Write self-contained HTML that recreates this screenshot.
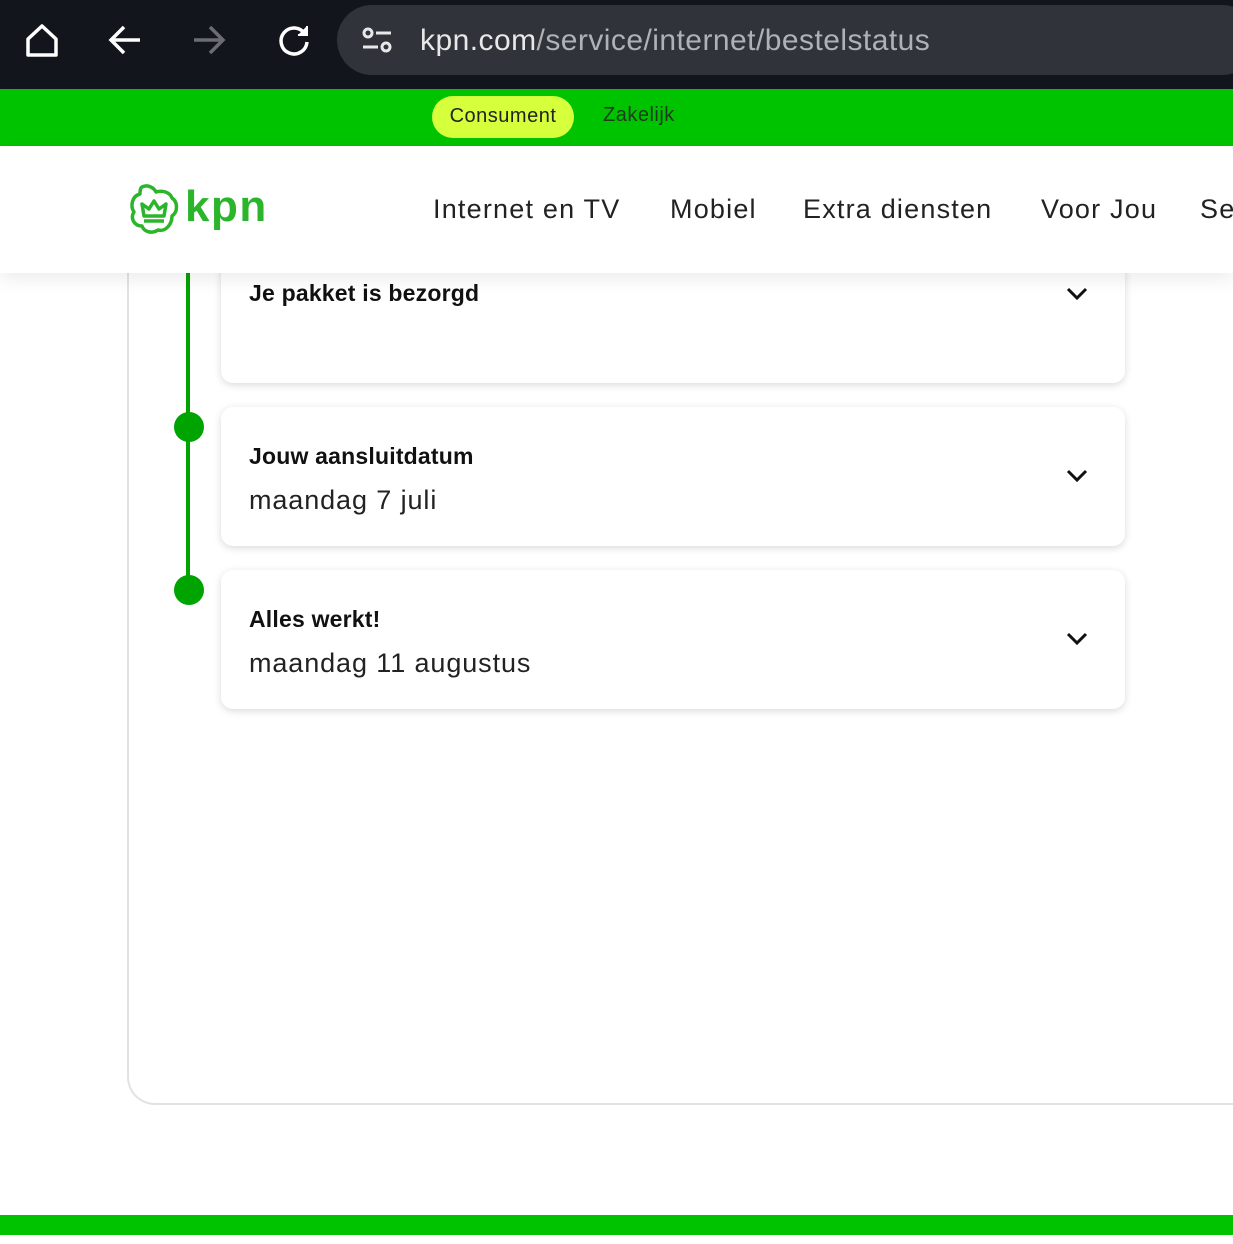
<!DOCTYPE html>
<html><head><style>
*{margin:0;padding:0;box-sizing:border-box}
body{width:1233px;height:1244px;background:#fff;position:relative;overflow:hidden;font-family:"Liberation Sans",sans-serif;color:#111}
.top{position:absolute;left:0;top:0;width:1233px;height:89px;background:#12151c}
.url{position:absolute;left:337px;top:5px;width:920px;height:70px;border-radius:35px;background:#30333a}
.url span{position:absolute;left:83px;top:19px;font-size:30px;color:#e8e8e8;letter-spacing:0.45px}
.url span b{font-weight:normal;color:#aeb1b6}
.gbar{position:absolute;left:0;top:89px;width:1233px;height:57px;background:#00c300}
.pill{position:absolute;left:432px;top:96px;width:142px;height:42px;border-radius:21px;background:#d6ff3c;font-size:20px;text-align:center;line-height:40px;color:#222;letter-spacing:0.5px}
.zak{position:absolute;left:603px;top:104px;font-size:20px;color:#1f3a1f;letter-spacing:0.5px}
.hdr{position:absolute;left:0;top:146px;width:1233px;height:127px;background:#fff;box-shadow:0 6px 18px rgba(0,0,0,.08);z-index:5}
.nav{position:absolute;top:48px;font-size:27px;color:#222;letter-spacing:1.2px}
.frame{position:absolute;left:127px;top:200px;width:1200px;height:905px;border:2px solid #e2e2e2;border-top:none;border-right:none;border-bottom-left-radius:28px}
.line{position:absolute;left:186px;top:260px;width:4px;height:330px;background:#00a400}
.dot{position:absolute;left:174px;width:30px;height:30px;border-radius:50%;background:#00a400}
.card{position:absolute;left:221px;width:904px;background:#fff;border-radius:12px;box-shadow:0 2px 8px rgba(0,0,0,.15)}
.card h3{position:absolute;left:28px;font-size:23px;font-weight:bold;letter-spacing:0.2px}
.card p{position:absolute;left:28px;font-size:27px;color:#222;letter-spacing:0.9px}
.card svg{position:absolute;left:845px}
.bottom{position:absolute;left:0;top:1215px;width:1233px;height:20px;background:#00c300}
</style></head><body>
<div class="top">
<svg style="position:absolute;left:24px;top:22px" width="36" height="36" viewBox="0 0 36 36" fill="none" stroke="#fff" stroke-width="3.5" stroke-linejoin="round"><path d="M4 17L18 4L32 17V33H4Z"/></svg>
<svg style="position:absolute;left:108px;top:24px" width="34" height="32" viewBox="0 0 34 32" fill="none" stroke="#fff" stroke-width="3.5"><path d="M32 16H4M16 3L3 16L16 29"/></svg>
<svg style="position:absolute;left:192px;top:24px" width="34" height="32" viewBox="0 0 34 32" fill="none" stroke="#6a6d72" stroke-width="3.5"><path d="M2 16H30M18 3L31 16L18 29"/></svg>
<svg style="position:absolute;left:276px;top:22px" width="36" height="36" viewBox="0 0 36 36" fill="none" stroke="#fff" stroke-width="3.5"><path d="M29 12A13 13 0 1 0 31 20"/><path d="M31 4V13H22" fill="#fff" stroke-width="2"/></svg>
<div class="url">
<svg style="position:absolute;left:24px;top:22px" width="32" height="28" viewBox="0 0 32 28" fill="none" stroke="#e8e8e8" stroke-width="3"><circle cx="7" cy="6" r="4"/><path d="M15 6H30M2 20H17"/><circle cx="25" cy="20" r="4"/></svg>
<span>kpn.com<b>/service/internet/bestelstatus</b></span></div>
</div>
<div class="gbar"></div>
<div class="pill">Consument</div>
<div class="zak">Zakelijk</div>
<div class="hdr">
<svg style="position:absolute;left:128px;top:36px" width="54" height="54" viewBox="0 0 54 54" fill="none" stroke="#2bb52b" stroke-width="3.5" stroke-linejoin="round"><path d="M14 5C20 2 26 6 28 10C34 8 42 10 44 16C50 20 50 30 44 34C44 42 38 50 30 48C24 52 16 50 14 44C6 44 2 36 6 30C2 24 4 14 12 12C12 10 12 6 14 5Z"/><path d="M16 34L14 22L21 27L26 19L31 27L38 22L36 34Z"/><path d="M16 39H36"/></svg>
<div style="position:absolute;left:185px;top:36px;font-size:44px;font-weight:bold;color:#2bb52b;letter-spacing:1.5px">kpn</div>
<div class="nav" style="left:433px">Internet en TV</div>
<div class="nav" style="left:670px">Mobiel</div>
<div class="nav" style="left:803px">Extra diensten</div>
<div class="nav" style="left:1041px">Voor Jou</div>
<div class="nav" style="left:1200px">Se</div>
</div>
<div class="frame"></div>
<div class="line"></div>
<div class="dot" style="top:412px"></div>
<div class="dot" style="top:575px"></div>
<div class="card" style="top:220px;height:163px"><h3 style="top:60px">Je pakket is bezorgd</h3>
<svg style="top:67px" width="22" height="14" viewBox="0 0 22 14" fill="none" stroke="#111" stroke-width="3"><path d="M2 2L11 11L20 2"/></svg></div>
<div class="card" style="top:407px;height:139px"><h3 style="top:36px">Jouw aansluitdatum</h3><p style="top:78px">maandag 7 juli</p>
<svg style="top:62px" width="22" height="14" viewBox="0 0 22 14" fill="none" stroke="#111" stroke-width="3"><path d="M2 2L11 11L20 2"/></svg></div>
<div class="card" style="top:570px;height:139px"><h3 style="top:36px">Alles werkt!</h3><p style="top:78px">maandag 11 augustus</p>
<svg style="top:62px" width="22" height="14" viewBox="0 0 22 14" fill="none" stroke="#111" stroke-width="3"><path d="M2 2L11 11L20 2"/></svg></div>
<div class="bottom"></div>
</body></html>
